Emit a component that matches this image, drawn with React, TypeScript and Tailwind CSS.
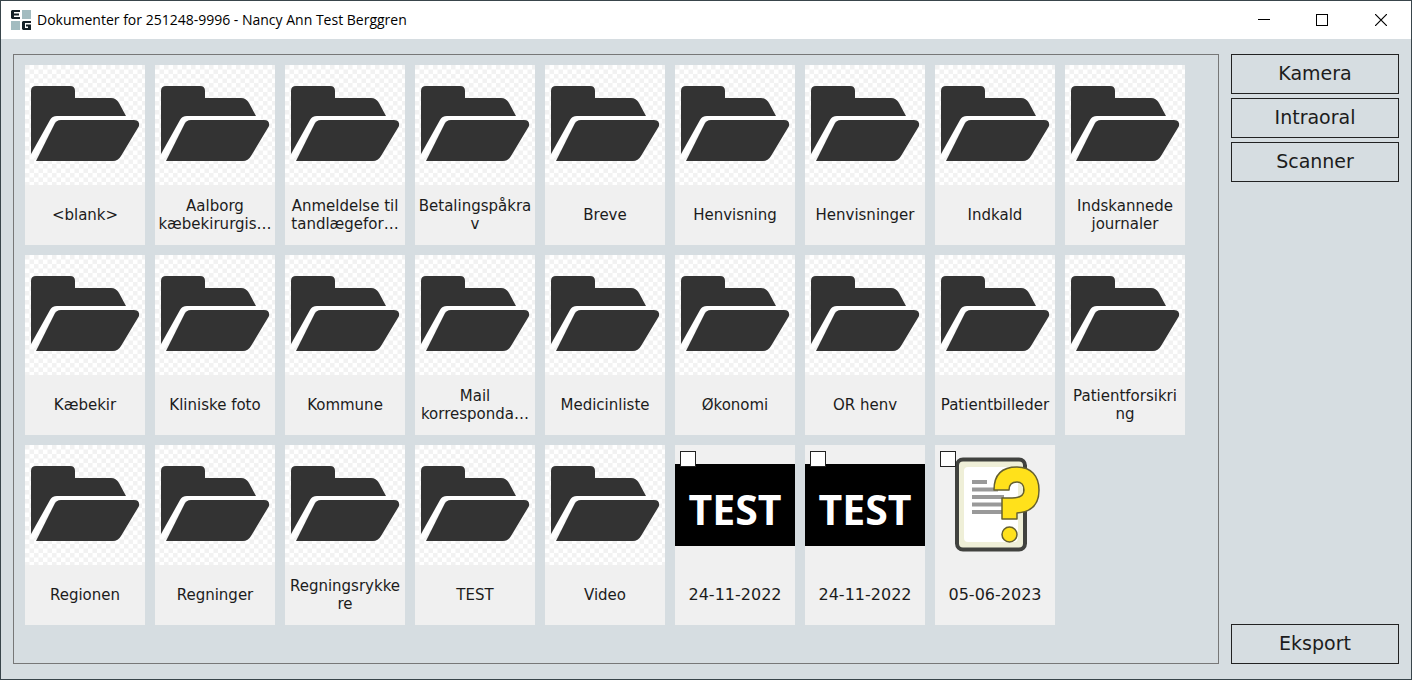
import { useId } from 'react'

type Item = {
  name: string
  kind: 'folder' | 'image' | 'unknown'
}

const items: Item[] = [
  { name: '<blank>', kind: 'folder' },
  { name: 'Aalborg\nkæbekirurgis…', kind: 'folder' },
  { name: 'Anmeldelse til\ntandlægefor…', kind: 'folder' },
  { name: 'Betalingspåkra\nv', kind: 'folder' },
  { name: 'Breve', kind: 'folder' },
  { name: 'Henvisning', kind: 'folder' },
  { name: 'Henvisninger', kind: 'folder' },
  { name: 'Indkald', kind: 'folder' },
  { name: 'Indskannede\njournaler', kind: 'folder' },
  { name: 'Kæbekir', kind: 'folder' },
  { name: 'Kliniske foto', kind: 'folder' },
  { name: 'Kommune', kind: 'folder' },
  { name: 'Mail\nkorresponda…', kind: 'folder' },
  { name: 'Medicinliste', kind: 'folder' },
  { name: 'Økonomi', kind: 'folder' },
  { name: 'OR henv', kind: 'folder' },
  { name: 'Patientbilleder', kind: 'folder' },
  { name: 'Patientforsikri\nng', kind: 'folder' },
  { name: 'Regionen', kind: 'folder' },
  { name: 'Regninger', kind: 'folder' },
  { name: 'Regningsrykke\nre', kind: 'folder' },
  { name: 'TEST', kind: 'folder' },
  { name: 'Video', kind: 'folder' },
  { name: '24-11-2022', kind: 'image' },
  { name: '24-11-2022', kind: 'image' },
  { name: '05-06-2023', kind: 'unknown' },
]

function Logo() {
  return (
    <svg viewBox="0 0 20 20" className="size-5" aria-hidden="true">
      <path d="M11 0h9v9h-9zM0 11h9v9H0z" fill="#a3bcc0" />
      <path d="M1 0h8v2H3v1.500h5v2H3V7h6v2H1L0 8V1z" fill="#142027" />
      <path d="M12 11h8v2h-6v5h3v-1.500h-2v-2h5V20h-8l-1-1v-7z" fill="#142027" />
    </svg>
  )
}

function FolderArt() {
  const id = useId()
  return (
    <svg viewBox="0 0 120 120" className="size-30" aria-hidden="true">
      <defs>
        <pattern id={id} width="9" height="9" patternUnits="userSpaceOnUse">
          <path d="M0 0h4.500v4.500H0zM4.500 4.500H9V9H4.500z" fill="#f2f2f2" />
        </pattern>
      </defs>
      <rect width="120" height="120" fill="#fff" />
      <rect width="120" height="120" fill={`url(#${id})`} />
      <path d="M30 53h76M8 92L29 53" stroke="#fff" strokeWidth="5" fill="none" />
      <path
        d="M6 89V26q0-5 5-5h34q5 0 5 5v7h36q5 0 8 5l7 13H32q-5 0-7 4z"
        fill="#333"
      />
      <path d="M11 96L29 60q2-5 7-5h73q6 0 5 6l-18 30q-3 5-8 5z" fill="#333" />
    </svg>
  )
}

function TestArt() {
  return (
    <div className="flex h-30 items-center">
      <div className="flex h-[82px] w-full items-center justify-center bg-black pt-2 font-['Open_Sans',sans-serif] text-[41px] leading-none font-bold text-white">
        TEST
      </div>
    </div>
  )
}

function UnknownArt() {
  return (
    <svg viewBox="0 0 120 120" className="size-30" aria-hidden="true">
      <rect x="22" y="14.500" width="68" height="90" rx="6" fill="#efefd8" stroke="#41423f" strokeWidth="4" />
      <rect x="29" y="22" width="54" height="75" rx="4" fill="#fff" />
      <path d="M37 37h15M37 44.500h26M37 52h32M37 59.500h32M37 67h32" stroke="#999" strokeWidth="4" />
      <path
        d="M59 45C59 29 68 22 82 22C96 22 104 31 104 45C104 60 96 67 82 68V74H67V53H77C85 53 89 51 89 45C89 40 86 37 82 37C77 37 74 40 74 45Z"
        fill="#ffe11b"
        stroke="#65602f"
        strokeWidth="1.500"
        strokeLinejoin="round"
      />
      <circle cx="74.500" cy="89.500" r="7.500" fill="#ffe11b" stroke="#65602f" strokeWidth="1.500" />
    </svg>
  )
}

function Tile({ item }: { item: Item }) {
  const label = (
    <span className="flex h-15 items-center justify-center text-center leading-[18px] whitespace-pre">
      {item.name}
    </span>
  )

  if (item.kind === 'folder') {
    return (
      <button type="button" className="block w-30 bg-[#f0f0f0] text-[15px]">
        <FolderArt />
        {label}
      </button>
    )
  }

  return (
    <label className="relative block w-30 bg-[#f0f0f0] text-base">
      <input
        type="checkbox"
        className="absolute top-1.5 left-[5px] size-4 appearance-none border border-[#222] bg-white checked:bg-gray-700"
      />
      {item.kind === 'image' ? <TestArt /> : <UnknownArt />}
      {label}
    </label>
  )
}

function SideButton({ children }: { children: string }) {
  return (
    <button
      type="button"
      className="h-10 w-full border border-[#222] pb-0.5 text-[19px] leading-6 hover:bg-white/30"
    >
      {children}
    </button>
  )
}

export default function App() {
  return (
    <div className="flex min-h-screen flex-col border border-[#39454b] bg-[#d6dde1] font-['DejaVu_Sans',Verdana,sans-serif] text-[#1c1c1c]">
      <header className="flex h-[38px] items-center bg-white pl-2.5 text-black">
        <Logo />
        <h1 className="ml-1.5 flex-1 font-['Open_Sans','Noto_Sans',sans-serif] text-sm">
          Dokumenter for 251248-9996 - Nancy Ann Test Berggren
        </h1>
        <button type="button" aria-label="Minimize" className="grid h-full w-[58px] place-items-center">
          <svg viewBox="0 0 12 12" className="size-3" shapeRendering="crispEdges">
            <path d="M0 5.500h12" stroke="currentColor" />
          </svg>
        </button>
        <button type="button" aria-label="Maximize" className="grid h-full w-[58px] place-items-center">
          <svg viewBox="0 0 12 12" className="size-3" shapeRendering="crispEdges">
            <path d="M.5.500h11v11H.5z" fill="none" stroke="currentColor" />
          </svg>
        </button>
        <button type="button" aria-label="Close" className="grid h-full w-[60px] place-items-center">
          <svg viewBox="0 0 12 12" className="size-3">
            <path d="M0 0l12 12M12 0L0 12" stroke="currentColor" strokeWidth="1.200" />
          </svg>
        </button>
      </header>

      <div className="flex flex-1 gap-3 px-3 py-[15px]">
        <main className="flex flex-1 flex-wrap content-start gap-2.5 border border-[#777] p-2.5 pl-[11px]">
          {items.map((item, i) => (
            <Tile key={i} item={item} />
          ))}
        </main>

        <aside className="flex w-[168px] flex-col gap-1">
          <SideButton>Kamera</SideButton>
          <SideButton>Intraoral</SideButton>
          <SideButton>Scanner</SideButton>
          <div className="mt-auto">
            <SideButton>Eksport</SideButton>
          </div>
        </aside>
      </div>
    </div>
  )
}
